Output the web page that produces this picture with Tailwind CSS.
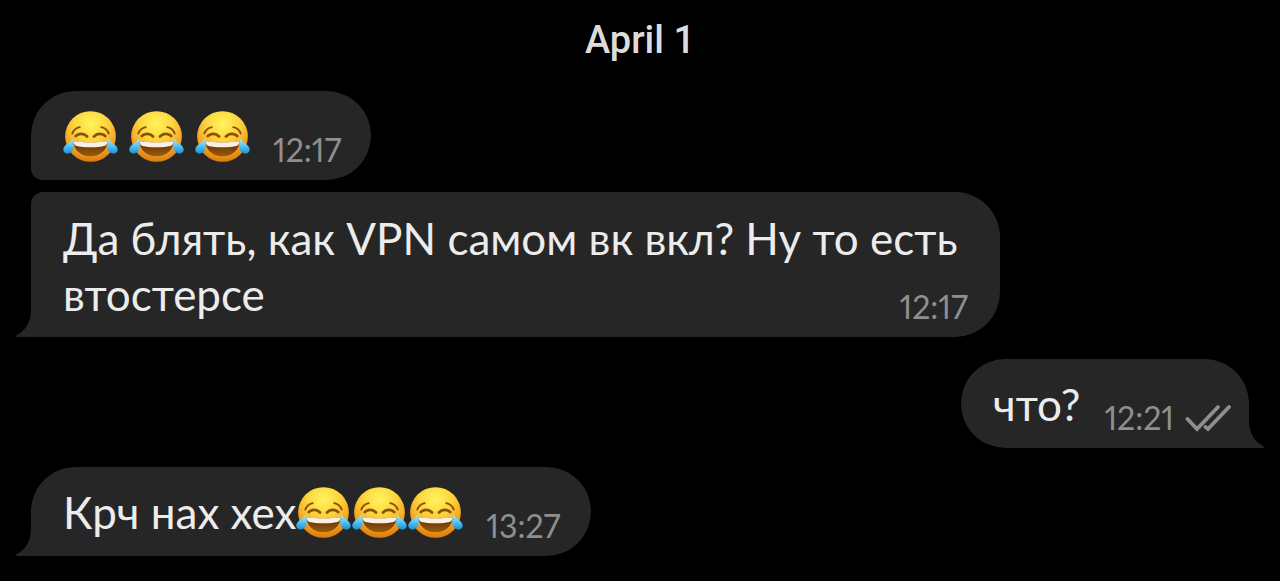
<!DOCTYPE html>
<html lang="ru">
<head>
  <meta charset="UTF-8" />
  <meta name="viewport" content="width=device-width, initial-scale=1.0" />
  <title>Chat</title>
  <script src="https://cdn.jsdelivr.net/npm/@tailwindcss/browser@4"></script>
</head>
<body class="bg-black text-[#ececec] font-['Lato','Noto_Sans',sans-serif] min-h-screen">
  <!-- Shared shapes -->
  <svg class="absolute size-0" aria-hidden="true">
    <defs>
      <radialGradient id="face" cx="50%" cy="24%" r="76%">
        <stop offset="0" stop-color="#fff45c" />
        <stop offset=".45" stop-color="#fdd23c" />
        <stop offset=".75" stop-color="#f3a524" />
        <stop offset="1" stop-color="#d97a10" />
      </radialGradient>
      <linearGradient id="tear" x1="0" y1="0" x2="0" y2="1">
        <stop offset="0" stop-color="#b4ecfb" />
        <stop offset=".55" stop-color="#4cc0f2" />
        <stop offset="1" stop-color="#1b8fd6" />
      </linearGradient>
      <linearGradient id="mouth" x1="0" y1="0" x2="0" y2="1">
        <stop offset="0" stop-color="#5b2c06" />
        <stop offset="1" stop-color="#9a5a0a" />
      </linearGradient>
      <symbol id="joy" viewBox="0 -1 57 57">
        <circle cx="28" cy="28" r="25.8" fill="url(#face)" />
        <g fill="none" stroke="#8a4f0c" stroke-linecap="round">
          <path d="M9.5 25C10.5 22 13 19.5 17 18.5M46.5 25C45.5 22 43 19.5 39 18.5" stroke-width="2" />
          <path d="M13 27.5C16 24.500 21 24.500 24.500 28M31.500 28C35 24.500 40 24.500 43 27.500" stroke-width="2.800" />
        </g>
        <path d="M10.5 32.5C21 35 35 35 45.5 32.5C45 42 38 48 28 48C18 48 11 42 10.5 32.5Z" fill="url(#mouth)" />
        <path d="M11 32.5C21 34.5 35 34.5 45 32.5C45 35 44.5 36.500 43 37.3C34 39.5 22 39.5 13 37.3C11.5 36.5 11 35 11 32.5Z" fill="#f8efe6" />
        <path d="M10.3 30C11.2 35 11.500 40 9.300 43C6.5 46.500 1.5 46 .5 42.500C-.3 38.5 3 36.500 5.5 34.500C7.5 33 9 32 10.3 30Z" fill="url(#tear)" />
        <path d="M45.7 30C44.8 35 44.500 40 46.700 43C49.5 46.500 54.5 46 55.5 42.500C56.3 38.5 53 36.500 50.5 34.500C48.5 33 47 32 45.7 30Z" fill="url(#tear)" />
      </symbol>
      <symbol id="tail" viewBox="0 0 16 48">
        <path d="M16 0V48H1Q-1 46.5 1 46C10 41 15 33 15 20V0Z" fill="#262626" />
      </symbol>
    </defs>
  </svg>

  <main class="flex flex-col px-[31px] pt-4">
    <h1 class="text-center text-[38px] leading-12 font-medium font-['Roboto',sans-serif] text-[#dcdcdc]">April 1</h1>

    <article class="mt-[27px] flex h-[89px] items-center gap-[22px] self-start rounded-[45px] rounded-bl-xl bg-[#262626] pr-[30px] pl-8">
      <p class="flex gap-[10px]">
        <svg class="size-14" role="img" aria-label="😂"><use href="#joy" /></svg>
        <svg class="size-14" role="img" aria-label="😂"><use href="#joy" /></svg>
        <svg class="size-14" role="img" aria-label="😂"><use href="#joy" /></svg>
      </p>
      <time class="self-end pb-2 text-[32px] leading-11 proportional-nums text-[#8f8f8f]">12:17</time>
    </article>

    <article class="relative mt-3 flex items-end self-start rounded-[45px] rounded-tl-xl rounded-bl-none bg-[#262626] pt-[18px] pr-8 pb-[15px] pl-8">
      <svg class="absolute bottom-0 -left-[15px] h-12 w-4" aria-hidden="true"><use href="#tail" /></svg>
      <p class="text-[44px] leading-14">Да блять, как VPN самом вк вкл? Ну то есть<br />втостерсе</p>
      <time class="-ml-[58px] text-[32px] leading-[30px] proportional-nums text-[#8f8f8f]">12:17</time>
    </article>

    <article class="relative mt-[22px] flex h-[89px] items-center gap-6 self-end rounded-[45px] rounded-br-none bg-[#262626] pr-[18px] pl-8">
      <svg class="absolute bottom-0 -right-[15px] h-12 w-4 -scale-x-100" aria-hidden="true"><use href="#tail" /></svg>
      <p class="text-[44px] leading-14">что?</p>
      <div class="flex items-center gap-[11px] self-end pb-2">
        <time class="text-[32px] leading-11 proportional-nums text-[#8f8f8f]">12:21</time>
        <svg class="h-7 w-[46px]" viewBox="0 0 46 28" fill="none" stroke="#8f8f8f" stroke-width="3.8" stroke-linecap="round" role="img" aria-label="Прочитано">
          <path d="M2.5 15L12 25L33 3M20.5 23L23 25L44 3" />
        </svg>
      </div>
    </article>

    <article class="relative mt-[19px] flex h-[89px] items-center gap-[22px] self-start rounded-[45px] rounded-bl-none bg-[#262626] pr-[30px] pl-8">
      <svg class="absolute bottom-0 -left-[15px] h-12 w-4" aria-hidden="true"><use href="#tail" /></svg>
      <p class="flex items-center text-[44px] leading-14">
        Крч нах хех
        <svg class="size-14" role="img" aria-label="😂"><use href="#joy" /></svg>
        <svg class="size-14" role="img" aria-label="😂"><use href="#joy" /></svg>
        <svg class="size-14" role="img" aria-label="😂"><use href="#joy" /></svg>
      </p>
      <time class="self-end pb-2 text-[32px] leading-11 proportional-nums text-[#8f8f8f]">13:27</time>
    </article>
  </main>
</body>
</html>
